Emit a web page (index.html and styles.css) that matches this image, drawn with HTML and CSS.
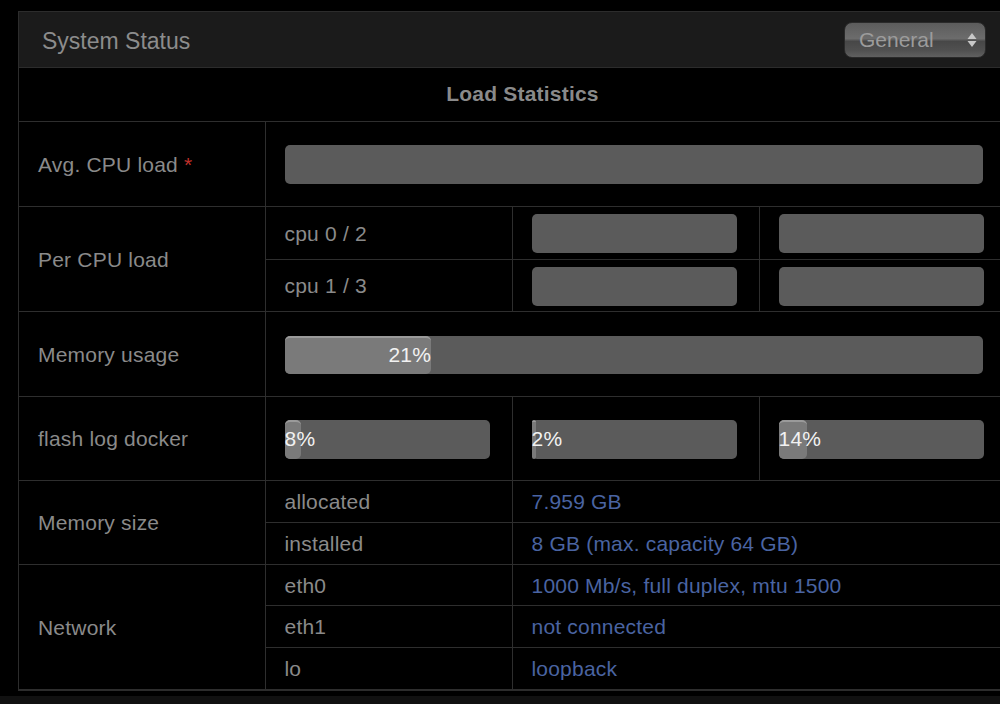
FILE: index.html
```html
<!DOCTYPE html>
<html>
<head>
  <link rel="stylesheet" href="styles.css">
</head>
<body>
  <div class="page">
    <div class="panel">
      <div class="panel-head">
        <h2>System Status</h2>
        <div class="select">
          <span>General</span>
          <svg width="10" height="16" viewBox="0 0 10 16">
            <path d="M5 1 L9.5 7 L0.5 7 Z" fill="#c8c8c8"/>
            <path d="M5 15 L9.5 9 L0.5 9 Z" fill="#c8c8c8"/>
          </svg>
        </div>
      </div>
      <table class="stats">
        <colgroup>
          <col class="c1"><col class="c2"><col class="c3"><col>
        </colgroup>
        <tr class="r-title">
          <th colspan="4">Load Statistics</th>
        </tr>
        <tr class="r-big">
          <td class="label">Avg. CPU load <span class="req">*</span></td>
          <td colspan="3" class="barcell"><div class="bar wide"></div></td>
        </tr>
        <tr class="r-mid">
          <td class="label" rowspan="2">Per CPU load</td>
          <td>cpu 0 / 2</td>
          <td class="barcell"><div class="bar"></div></td>
          <td class="barcell"><div class="bar"></div></td>
        </tr>
        <tr class="r-mid2">
          <td>cpu 1 / 3</td>
          <td class="barcell"><div class="bar"></div></td>
          <td class="barcell"><div class="bar"></div></td>
        </tr>
        <tr class="r-big">
          <td class="label">Memory usage</td>
          <td colspan="3" class="barcell">
            <div class="bar wide slim"><div class="fill" style="width:21%">21%</div></div>
          </td>
        </tr>
        <tr class="r-big2">
          <td class="label">flash log docker</td>
          <td class="barcell"><div class="bar"><div class="fill" style="width:8%">8%</div></div></td>
          <td class="barcell"><div class="bar"><div class="fill" style="width:2%">2%</div></div></td>
          <td class="barcell"><div class="bar"><div class="fill" style="width:14%">14%</div></div></td>
        </tr>
        <tr class="r-small">
          <td class="label" rowspan="2">Memory size</td>
          <td>allocated</td>
          <td colspan="2" class="value">7.959 GB</td>
        </tr>
        <tr class="r-small">
          <td>installed</td>
          <td colspan="2" class="value">8 GB (max. capacity 64 GB)</td>
        </tr>
        <tr class="r-small2">
          <td class="label" rowspan="3">Network</td>
          <td>eth0</td>
          <td colspan="2" class="value">1000 Mb/s, full duplex, mtu 1500</td>
        </tr>
        <tr class="r-small">
          <td>eth1</td>
          <td colspan="2" class="value">not connected</td>
        </tr>
        <tr class="r-small">
          <td>lo</td>
          <td colspan="2" class="value">loopback</td>
        </tr>
      </table>
    </div>
    <div class="footer"></div>
  </div>
</body>
</html>
```

FILE: styles.css
```css
* {
  margin: 0;
  padding: 0;
  box-sizing: border-box;
}
html, body {
  overflow: hidden;
}
body {
  background: #000;
  font-family: "Liberation Sans", Arial, sans-serif;
  color: #8a8a8a;
}
.page {
  padding-top: 11px;
  width: 1040px;
}
.panel {
  margin-left: 18px;
  width: 1010px;
  border: 1px solid #2c2c2c;
}
.panel-head {
  height: 56px;
  background: #1b1b1b;
  display: flex;
  align-items: center;
  justify-content: space-between;
  padding: 0 41px 0 23px;
  border-bottom: 1px solid #2c2c2c;
}
.panel-head h2 {
  font-size: 23px;
  font-weight: normal;
  color: #8c8c8c;
  padding-top: 3px;
}
.select {
  width: 142px;
  height: 36px;
  border-radius: 8px;
  border: 1px solid #2a2a2a;
  background: linear-gradient(#5c5c5c, #6c6c6c 46%, #474747 54%, #505050 80%, #606060);
  display: flex;
  align-items: center;
  justify-content: space-between;
  padding: 0 8px 0 14px;
}
.select span {
  font-size: 21px;
  color: #9c9c9c;
}
.stats {
  width: 100%;
  border-collapse: collapse;
  table-layout: fixed;
}
.stats .c1 { width: 246px; }
.stats .c2 { width: 247px; }
.stats .c3 { width: 247px; }
.stats th,
.stats td {
  border: 1px solid #2e2e2e;
  font-size: 21px;
  letter-spacing: 0.2px;
  text-align: left;
  padding: 2px 19px 0;
  vertical-align: middle;
  white-space: nowrap;
}
.stats tr:first-child th {
  border-top: 0;
  padding-top: 0;
}
.stats td:first-child,
.stats th:first-child {
  border-left: 0;
}
.stats th {
  text-align: center;
  font-weight: bold;
  color: #8a8a8a;
}
.r-title { height: 53px; }
.r-big { height: 85px; }
.r-big2 { height: 84px; }
.r-mid { height: 53px; }
.r-mid2 { height: 52px; }
.r-small { height: 42px; }
.r-small2 { height: 41px; }
.stats .barcell {
  padding-left: 19px;
}
.req {
  color: #c0312b;
}
.value {
  color: #4a64a2;
}
.bar {
  width: 205px;
  height: 39px;
  border-radius: 5px;
  background: #5b5b5b;
}
.bar.wide {
  width: 698px;
}
.bar.slim {
  height: 38px;
}
.fill {
  height: 100%;
  border-radius: 5px;
  background: #7a7a7a;
  border-top: 2px solid #9a9a9a;
  color: #f2f2f2;
  font-size: 21px;
  line-height: 34px;
  text-align: right;
  white-space: nowrap;
}
.footer {
  margin-top: 5px;
  height: 20px;
  background: #111;
}
```
